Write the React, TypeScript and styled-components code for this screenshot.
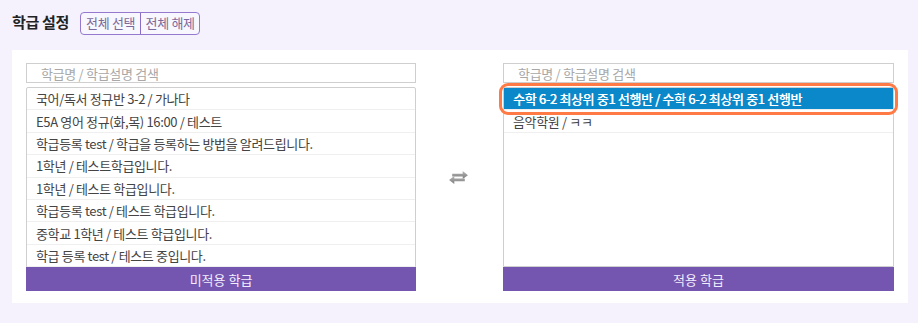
import React from 'react';
import styled, { createGlobalStyle } from 'styled-components';

const FONT = `"Noto Sans CJK KR", "Noto Sans", sans-serif`;
const PURPLE = '#7455b0';

const GlobalStyle = createGlobalStyle`
	html, body {
		margin: 0;
		padding: 0;
		background: #f5f2fd;
		font-family: ${FONT};
	}
	* {
		box-sizing: border-box;
	}
`;

const Page = styled.div`
	width: 918px;
	height: 323px;
	padding: 12px 10px 0 12px;
`;

const Header = styled.div`
	display: flex;
	align-items: center;
	height: 22px;
	margin-bottom: 16px;
`;

const Title = styled.h2`
	margin: 0 11px 0 0;
	font-size: 15px;
	font-weight: 700;
	color: #222;
	line-height: 22px;
	padding-bottom: 2px;
	letter-spacing: -0.3px;
`;

const ButtonGroup = styled.div`
	display: flex;
	height: 23px;
	border: 1px solid #9479cf;
	border-radius: 4px;
	overflow: hidden;
	background: #f8f6fe;
`;

const GroupButton = styled.button<{ $first?: boolean }>`
	width: 59px;
	height: 100%;
	border: none;
	border-left: ${p => (p.$first ? 'none' : '1px solid #8a6cc9')};
	background: transparent;
	color: #7a6a9c;
	font-family: ${FONT};
	font-size: 13px;
	letter-spacing: -0.3px;
	padding: 0;
	line-height: 20px;
`;

const Panel = styled.div`
	width: 896px;
	height: 253px;
	background: #fff;
	padding: 13px 14px 12px 14px;
	display: grid;
	grid-template-columns: 390px 1fr 391px;
`;

const Column = styled.div`
	display: flex;
	flex-direction: column;
`;

const Search = styled.input`
	height: 20px;
	border: 1px solid #cfcfcf;
	padding: 0 14px;
	font-family: ${FONT};
	font-size: 13px;
	letter-spacing: -0.3px;
	color: #333;
	outline: none;
	margin-bottom: 4px;
	&::placeholder {
		color: #a8a8a8;
	}
`;

const List = styled.div`
	height: 180px;
	border: 1px solid #cfcfcf;
	border-radius: 2px 2px 0 0;
	background: #fff;
	display: flex;
	flex-direction: column;
`;

const Row = styled.div<{ $selected?: boolean }>`
	position: relative;
	height: 22.4px;
	flex-shrink: 0;
	padding-left: 9px;
	display: flex;
	align-items: center;
	font-size: 13px;
	letter-spacing: -0.35px;
	border-bottom: 1px solid #efefef;
	white-space: nowrap;
	color: ${p => (p.$selected ? '#fff' : '#444')};
	background: ${p => (p.$selected ? '#0a88c9' : 'transparent')};
	text-shadow: ${p => (p.$selected ? '0.4px 0 0 #fff' : 'none')};
`;

const Highlight = styled.span`
	position: absolute;
	top: -5px;
	bottom: -6px;
	left: -5px;
	right: -5px;
	border: 3px solid #ff7a45;
	border-radius: 9px;
	pointer-events: none;
`;

const Footer = styled.div`
	height: 24px;
	background: ${PURPLE};
	color: #f3eefd;
	font-size: 13px;
	display: flex;
	align-items: center;
	justify-content: center;
`;

const Middle = styled.div`
	display: flex;
	align-items: center;
	justify-content: center;
	padding-right: 2px;
`;

const SwapIcon = () => (
	<svg width="21" height="15" viewBox="0 0 20 14">
		<defs>
			<linearGradient id="g" x1="0" y1="0" x2="0" y2="1">
				<stop offset="0" stopColor="#b5b5b5" />
				<stop offset="1" stopColor="#7d7d7d" />
			</linearGradient>
		</defs>
		<path d="M4 3.5 L14 3.5 L14 0.8 L19 4.8 L14 8.4 L14 6 L4 6 Z" fill="url(#g)" />
		<path d="M16 8 L6 8 L6 5.6 L1 9.4 L6 13.2 L6 10.6 L16 10.6 Z" fill="url(#g)" />
	</svg>
);

const unassigned = [
	'국어/독서 정규반 3-2 / 가나다',
	'E5A 영어 정규(화,목) 16:00 / 테스트',
	'학급등록 test / 학급을 등록하는 방법을 알려드립니다.',
	'1학년 / 테스트학급입니다.',
	'1학년 / 테스트 학급입니다.',
	'학급등록 test / 테스트 학급입니다.',
	'중학교 1학년 / 테스트 학급입니다.',
	'학급 등록 test / 테스트 중입니다.',
];

const assigned = [
	'수학 6-2 최상위 중1 선행반 / 수학 6-2 최상위 중1 선행반',
	'음악학원 / ㅋㅋ',
];

export default function App() {
	return (
		<Page>
			<GlobalStyle />
			<Header>
				<Title>학급 설정</Title>
				<ButtonGroup>
					<GroupButton $first>전체 선택</GroupButton>
					<GroupButton>전체 해제</GroupButton>
				</ButtonGroup>
			</Header>
			<Panel>
				<Column>
					<Search placeholder="학급명 / 학급설명 검색" />
					<List>
						{unassigned.map(t => (
							<Row key={t}>{t}</Row>
						))}
					</List>
					<Footer>미적용 학급</Footer>
				</Column>
				<Middle>
					<SwapIcon />
				</Middle>
				<Column>
					<Search placeholder="학급명 / 학급설명 검색" />
					<List>
						{assigned.map((t, i) => (
							<Row key={t} $selected={i === 0}>
								{t}
								{i === 0 && <Highlight />}
							</Row>
						))}
					</List>
					<Footer>적용 학급</Footer>
				</Column>
			</Panel>
		</Page>
	);
}
